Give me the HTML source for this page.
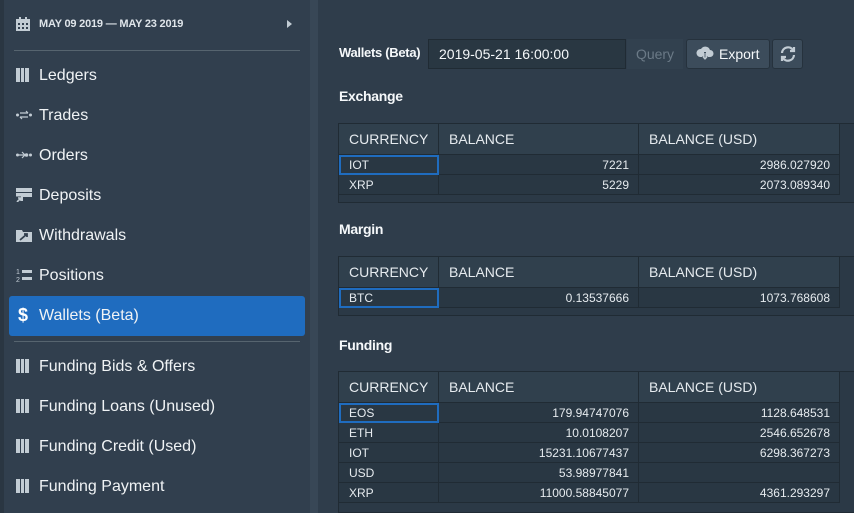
<!DOCTYPE html>
<html><head><style>
html,body{margin:0;width:854px;height:513px;overflow:hidden}
body{background:#2f3d4b;font-family:"Liberation Sans",sans-serif;color:#f5f8fa;position:relative}
svg{display:block}
.side{position:absolute;left:0;top:0;width:310px;height:513px;background:#313f4e;border-left:4px solid #2a3642;box-sizing:border-box}
.strip{position:absolute;left:310px;top:0;width:8px;height:513px;background:#384756}
.date{position:absolute;top:17px;font-size:11px;font-weight:bold;color:#dfe5ea;letter-spacing:-0.2px}
.hr{position:absolute;left:14px;width:286px;height:1px;background:#56646f}
.item{position:absolute;left:9px;width:296px;height:40px;line-height:40px;font-size:16px;color:#f0f3f5;border-radius:3px}
.item span{position:absolute;left:30px;top:0}
.item i{position:absolute;left:7px;top:12px;width:18px;height:16px;font-style:normal;color:#c2ccd4;line-height:16px;display:block}
.act{background:#1f6cbf}
.ttl{position:absolute;left:339px;font-size:14px;font-weight:bold;letter-spacing:-0.3px}
table{position:absolute;left:338px;border-collapse:collapse;font-size:12px;color:#e6ebef}
td,th{border:1px solid #202b34;padding:0 0 0 10px;height:19px}
th{height:30px;font-weight:normal;font-size:14px;text-align:left;background:#30404d;color:#e6ebef}
td{background:#293743}
td.r{text-align:right;padding:0 9px 0 0}
.sel{outline:2px solid #1f6cbf;outline-offset:-2px}
.wrap{position:absolute;left:338px;width:516px;background:#2b3946;border:1px solid #202b34;border-right:none;box-sizing:border-box}
</style></head><body>
<div class="side">
<svg style="position:absolute;left:12px;top:17px" width="14" height="14" viewBox="0 0 14 14" fill="#c2ccd4"><rect x="0" y="2" width="14" height="12"/><rect x="3" y="0" width="2" height="3"/><rect x="9" y="0" width="2" height="3"/><g fill="#313f4e"><rect x="2" y="6" width="2" height="2"/><rect x="6" y="6" width="2" height="2"/><rect x="10" y="6" width="2" height="2"/><rect x="2" y="10" width="2" height="2"/><rect x="6" y="10" width="2" height="2"/><rect x="10" y="10" width="2" height="2"/></g></svg>
<div class="date" style="left:35px;top:18px">MAY 09 2019 — MAY 23 2019</div>
<div style="position:absolute;left:283px;top:20px;border-left:5px solid #c2ccd4;border-top:4px solid transparent;border-bottom:4px solid transparent"></div>
</div>
<div class="hr" style="top:50px"></div>
<div class="item" style="top:56px"><i><svg width="13" height="14"><rect x="0" y="0" width="4" height="14" fill="#c2ccd4"/><rect x="5" y="0" width="3" height="14" fill="#c2ccd4"/><rect x="9" y="0" width="4" height="14" fill="#c2ccd4"/></svg></i><span>Ledgers</span></div>
<div class="item" style="top:96px"><i><svg width="16" height="14"><circle cx="1.5" cy="7" r="1.5" fill="#c2ccd4"/><circle cx="14.5" cy="7" r="1.5" fill="#c2ccd4"/><path d="M4 5 H12 M10 3 L12 5 M4 9 H12 M6 11 L4 9" stroke="#c2ccd4" stroke-width="1.2" fill="none"/></svg></i><span>Trades</span></div>
<div class="item" style="top:136px"><i><svg width="16" height="14"><circle cx="1.5" cy="7" r="1.5" fill="#c2ccd4"/><circle cx="10.5" cy="7" r="1.8" fill="#c2ccd4"/><circle cx="14.5" cy="7" r="1.5" fill="#c2ccd4"/><path d="M3 7 H9 M6 4 L9 7 L6 10" stroke="#c2ccd4" stroke-width="1.2" fill="none"/></svg></i><span>Orders</span></div>
<div class="item" style="top:176px"><i><svg width="16" height="14"><rect x="0" y="0" width="16" height="4" fill="#c2ccd4"/><rect x="0" y="5" width="16" height="4" fill="#c2ccd4"/><path d="M1 14 L6 9 M2 9 H6 V13" stroke="#c2ccd4" stroke-width="2" fill="none"/><rect x="0" y="8.5" width="5" height="6" fill="#313f4e"/><path d="M1 14 L5 10 M2 10 H5 V13" stroke="#c2ccd4" stroke-width="1.6" fill="none"/></svg></i><span>Deposits</span></div>
<div class="item" style="top:216px"><i><svg width="16" height="14"><path d="M0 2 H6 L7 4 H16 V14 H0Z" fill="#c2ccd4"/><path d="M4 12 L11 6 M8 6 H11 V9" stroke="#313f4e" stroke-width="1.8" fill="none"/></svg></i><span>Withdrawals</span></div>
<div class="item" style="top:256px"><i><svg width="16" height="14"><text x="0" y="6" font-size="7" fill="#c2ccd4" font-family="Liberation Sans">1</text><text x="0" y="14" font-size="7" fill="#c2ccd4" font-family="Liberation Sans">2</text><rect x="6" y="2" width="10" height="3" fill="#c2ccd4"/><rect x="6" y="9" width="10" height="3" fill="#c2ccd4"/></svg></i><span>Positions</span></div>
<div class="item act" style="top:296px"><i style="color:#fff;font-weight:bold;font-size:18px;top:11px;left:9px">$</i><span>Wallets (Beta)</span></div>
<div class="hr" style="top:341px"></div>
<div class="item" style="top:347px"><i><svg width="13" height="14"><rect x="0" y="0" width="4" height="14" fill="#c2ccd4"/><rect x="5" y="0" width="3" height="14" fill="#c2ccd4"/><rect x="9" y="0" width="4" height="14" fill="#c2ccd4"/></svg></i><span>Funding Bids &amp; Offers</span></div>
<div class="item" style="top:387px"><i><svg width="13" height="14"><rect x="0" y="0" width="4" height="14" fill="#c2ccd4"/><rect x="5" y="0" width="3" height="14" fill="#c2ccd4"/><rect x="9" y="0" width="4" height="14" fill="#c2ccd4"/></svg></i><span>Funding Loans (Unused)</span></div>
<div class="item" style="top:427px"><i><svg width="13" height="14"><rect x="0" y="0" width="4" height="14" fill="#c2ccd4"/><rect x="5" y="0" width="3" height="14" fill="#c2ccd4"/><rect x="9" y="0" width="4" height="14" fill="#c2ccd4"/></svg></i><span>Funding Credit (Used)</span></div>
<div class="item" style="top:467px"><i><svg width="13" height="14"><rect x="0" y="0" width="4" height="14" fill="#c2ccd4"/><rect x="5" y="0" width="3" height="14" fill="#c2ccd4"/><rect x="9" y="0" width="4" height="14" fill="#c2ccd4"/></svg></i><span>Funding Payment</span></div>
<div class="strip"></div>

<div class="ttl" style="top:45px;font-size:13px">Wallets (Beta)</div>
<div style="position:absolute;left:428px;top:39px;width:198px;height:30px;background:#293742;border:1px solid #202b34;box-sizing:border-box;font-size:14px;line-height:28px;padding-left:10px">2019-05-21 16:00:00</div>
<div style="position:absolute;left:627px;top:39px;width:56px;height:30px;background:#32414f;color:#6b7a87;font-size:14px;line-height:30px;text-align:center">Query</div>
<div style="position:absolute;left:686px;top:39px;width:84px;height:30px;background:#3c4c5b;border:1px solid #26323d;box-sizing:border-box;border-radius:3px;font-size:14px;line-height:28px;padding-left:32px">Export</div>
<svg style="position:absolute;left:696px;top:46px" width="18" height="16" viewBox="0 0 18 16"><path d="M4 11 A4 4 0 0 1 5 3 A5 5 0 0 1 14 4 A3.5 3.5 0 0 1 14 11Z" fill="#c2ccd4"/><path d="M9 6 V14 M6 11 L9 14 L12 11" stroke="#3c4c5b" stroke-width="2" fill="none"/><path d="M9 7 V13 M7 11 L9 13 L11 11" stroke="#c2ccd4" stroke-width="1.2" fill="none"/></svg>
<div style="position:absolute;left:772px;top:39px;width:31px;height:30px;background:#3c4c5b;border:1px solid #26323d;box-sizing:border-box;border-radius:3px"></div>
<svg style="position:absolute;left:779px;top:45px" width="18" height="18" viewBox="0 0 18 18" fill="none" stroke="#c2ccd4" stroke-width="2.2"><path d="M3 8 A6 6 0 0 1 14 5"/><path d="M15 10 A6 6 0 0 1 4 13"/><path d="M15 2 V6 H11"/><path d="M3 16 V12 H7"/></svg>

<div class="ttl" style="top:88px">Exchange</div>
<div class="wrap" style="top:123px;height:80px"></div>
<table style="top:123px">
<tr><th style="width:89px">CURRENCY</th><th style="width:189px">BALANCE</th><th style="width:190px">BALANCE (USD)</th></tr>
<tr><td class="sel">IOT</td><td class="r">7221</td><td class="r">2986.027920</td></tr>
<tr><td>XRP</td><td class="r">5229</td><td class="r">2073.089340</td></tr>
</table>

<div class="ttl" style="top:221px">Margin</div>
<div class="wrap" style="top:256px;height:60px"></div>
<table style="top:256px">
<tr><th style="width:89px">CURRENCY</th><th style="width:189px">BALANCE</th><th style="width:190px">BALANCE (USD)</th></tr>
<tr><td class="sel">BTC</td><td class="r">0.13537666</td><td class="r">1073.768608</td></tr>
</table>

<div class="ttl" style="top:337px">Funding</div>
<div class="wrap" style="top:371px;height:142px"></div>
<table style="top:371px">
<tr><th style="width:89px">CURRENCY</th><th style="width:189px">BALANCE</th><th style="width:190px">BALANCE (USD)</th></tr>
<tr><td class="sel">EOS</td><td class="r">179.94747076</td><td class="r">1128.648531</td></tr>
<tr><td>ETH</td><td class="r">10.0108207</td><td class="r">2546.652678</td></tr>
<tr><td>IOT</td><td class="r">15231.10677437</td><td class="r">6298.367273</td></tr>
<tr><td>USD</td><td class="r">53.98977841</td><td class="r"></td></tr>
<tr><td>XRP</td><td class="r">11000.58845077</td><td class="r">4361.293297</td></tr>
</table>
</body></html>
